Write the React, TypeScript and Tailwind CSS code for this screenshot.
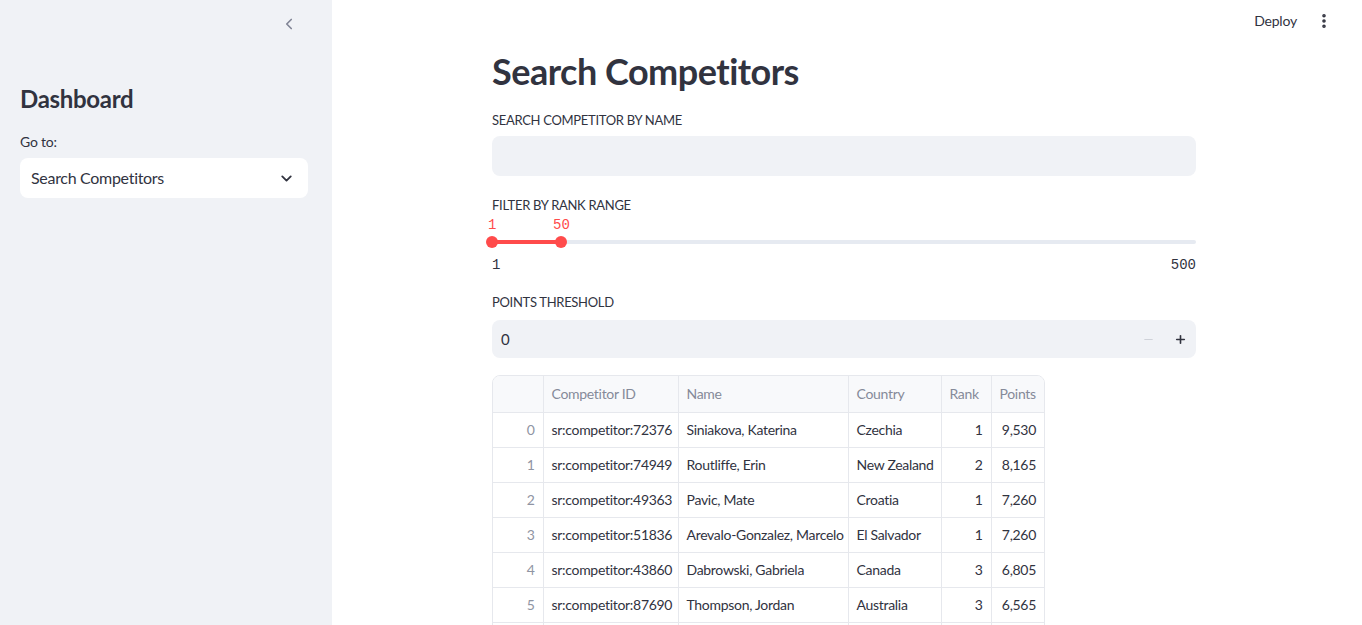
import { ChevronLeft, ChevronDown, EllipsisVertical, Minus, Plus } from "lucide-react";

const rows = [
  { id: "sr:competitor:72376", name: "Siniakova, Katerina", country: "Czechia", rank: 1, points: "9,530" },
  { id: "sr:competitor:74949", name: "Routliffe, Erin", country: "New Zealand", rank: 2, points: "8,165" },
  { id: "sr:competitor:49363", name: "Pavic, Mate", country: "Croatia", rank: 1, points: "7,260" },
  { id: "sr:competitor:51836", name: "Arevalo-Gonzalez, Marcelo", country: "El Salvador", rank: 1, points: "7,260" },
  { id: "sr:competitor:43860", name: "Dabrowski, Gabriela", country: "Canada", rank: 3, points: "6,805" },
  { id: "sr:competitor:87690", name: "Thompson, Jordan", country: "Australia", rank: 3, points: "6,565" },
  { id: "sr:competitor:59110", name: "Xu, Yifan", country: "China", rank: 4, points: "6,420" },
];

const mono = "font-['Liberation_Mono','DejaVu_Sans_Mono',monospace]";
const cell = "border-r border-b border-[#e6e8ed] px-2 whitespace-nowrap overflow-hidden";

export default function App() {
  return (
    <div className="flex h-[625px] w-full overflow-hidden bg-white font-['Lato','Noto_Sans',sans-serif] text-[#31333f]">
      {/* Sidebar */}
      <aside className="flex w-[332px] shrink-0 flex-col bg-[#f0f2f6] pl-5 pr-6">
        <div className="flex justify-end pt-[15px] pr-[10px]">
          <ChevronLeft className="h-[18px] w-[18px] text-[#808495]" strokeWidth={2.2} />
        </div>
        <h2 className="mt-[49px] text-[24px] font-bold leading-[34px] tracking-[-0.3px]">Dashboard</h2>
        <p className="mt-[17px] text-[14px] leading-[18px] tracking-[-0.2px]">Go to:</p>
        <div className="mt-[7px] flex h-10 items-center justify-between rounded-lg bg-white pl-[11px] pr-[13px]">
          <span className="text-[16px] tracking-[-0.3px]">Search Competitors</span>
          <ChevronDown className="h-[17px] w-[17px]" strokeWidth={2.6} />
        </div>
      </aside>

      {/* Main */}
      <main className="relative flex flex-1 justify-center pr-[6px]">
        <div className="absolute right-[29px] top-[10px] flex items-center gap-[18px]">
          <span className="text-[14px] tracking-[-0.2px]">Deploy</span>
          <EllipsisVertical className="h-[18px] w-[18px]" strokeWidth={2.8} />
        </div>

        <div className="mt-[49px] w-[704px]">
          <h1 className="text-[36px] font-bold leading-[44px] tracking-[-0.5px]">Search Competitors</h1>

          <p className="mt-[18px] text-[13px] leading-[18px] tracking-[-0.3px]">SEARCH COMPETITOR BY NAME</p>
          <div className="mt-[7px] h-10 rounded-lg bg-[#f0f2f6]" />

          <p className="mt-[20px] text-[13px] leading-[18px] tracking-[-0.3px]">FILTER BY RANK RANGE</p>
          <div className={`relative h-[79px] text-[14px] leading-[16px] ${mono}`}>
            <span className="absolute left-[-4px] top-[3px] text-[#ff4b4b]">1</span>
            <span className="absolute left-[61px] top-[3px] text-[#ff4b4b]">50</span>
            <div className="absolute left-0 right-0 top-[26px] h-1 rounded bg-[#e6eaf1]" />
            <div className="absolute left-0 top-[26px] h-1 w-[69px] bg-[#ff4b4b]" />
            <div className="absolute left-[-6px] top-[22px] h-3 w-3 rounded-full bg-[#ff4b4b]" />
            <div className="absolute left-[63px] top-[22px] h-3 w-3 rounded-full bg-[#ff4b4b]" />
            <span className="absolute left-0 top-[43px]">1</span>
            <span className="absolute right-0 top-[43px]">500</span>
          </div>

          <p className="text-[13px] leading-[18px] tracking-[-0.3px]">POINTS THRESHOLD</p>
          <div className="mt-[9px] flex h-[38px] items-center rounded-lg bg-[#f0f2f6] pl-[9px]">
            <span className="flex-1 text-[15px]">0</span>
            <div className="flex h-full items-center">
              <div className="flex h-full w-8 items-center justify-center">
                <Minus className="h-[13px] w-[13px] text-[#cfd2d9]" strokeWidth={2} />
              </div>
              <div className="flex h-full w-8 items-center justify-center">
                <Plus className="h-[13px] w-[13px]" strokeWidth={3} />
              </div>
            </div>
          </div>

          {/* Table */}
          <div className="mt-[17px] w-[553px] overflow-hidden rounded-t-lg border border-[#e6e8ed]">
            <table className="w-full table-fixed border-collapse text-[14px] tracking-[-0.3px]">
              <colgroup>
                <col className="w-[50px]" />
                <col className="w-[135px]" />
                <col className="w-[170px]" />
                <col className="w-[93px]" />
                <col className="w-[50px]" />
                <col />
              </colgroup>
              <thead>
                <tr className="h-[36px] bg-[#f8f9fb] text-[#858a99]">
                  <th className={cell} />
                  <th className={`${cell} text-left font-normal`}>Competitor ID</th>
                  <th className={`${cell} text-left font-normal`}>Name</th>
                  <th className={`${cell} text-left font-normal`}>Country</th>
                  <th className={`${cell} text-left font-normal`}>Rank</th>
                  <th className="border-b border-[#e6e8ed] px-2 text-left font-normal">Points</th>
                </tr>
              </thead>
              <tbody>
                {rows.map((r, i) => (
                  <tr key={r.id} className="h-[35px]">
                    <td className={`${cell} text-right text-[#8f94a3]`}>{i}</td>
                    <td className={cell}>{r.id}</td>
                    <td className={cell}>{r.name}</td>
                    <td className={cell}>{r.country}</td>
                    <td className={`${cell} text-right`}>{r.rank}</td>
                    <td className="border-b border-[#e6e8ed] px-2 text-right">{r.points}</td>
                  </tr>
                ))}
              </tbody>
            </table>
          </div>
        </div>
      </main>
    </div>
  );
}
